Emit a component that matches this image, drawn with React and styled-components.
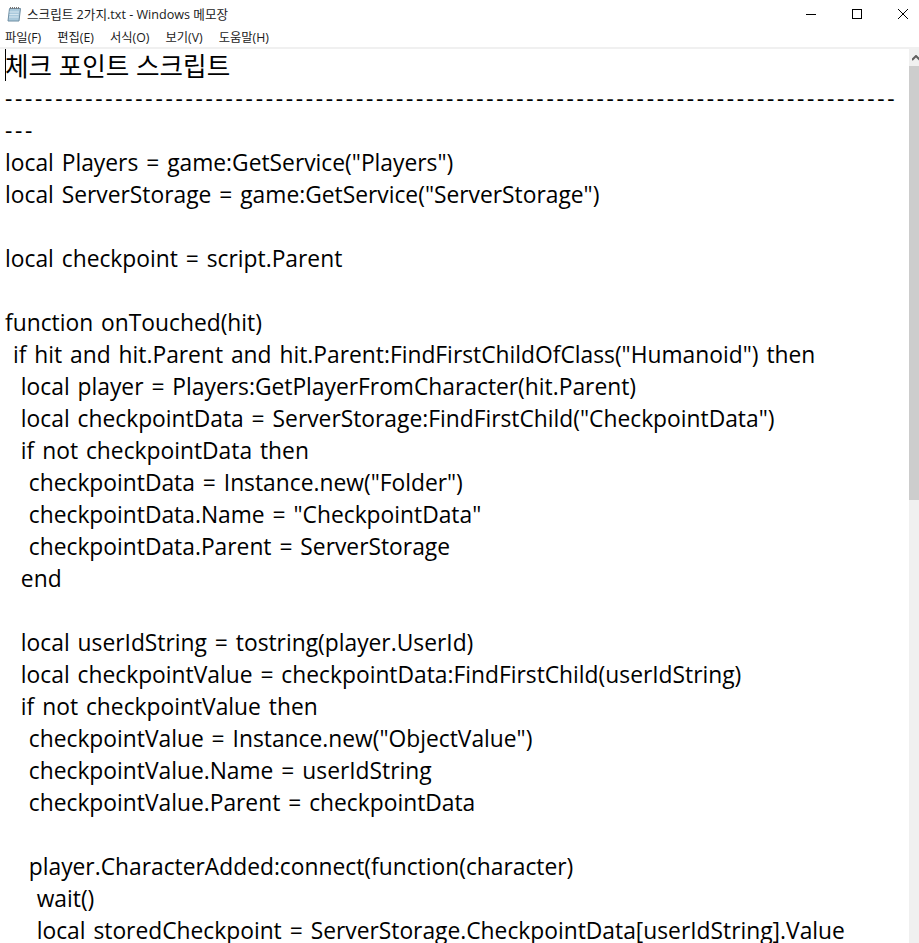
import React from "react";
import styled, { createGlobalStyle } from "styled-components";

const GlobalStyle = createGlobalStyle`
  html, body {
    margin: 0;
    padding: 0;
    background: #fff;
    overflow: hidden;
  }
`;

const Window = styled.div`
  width: 919px;
  height: 943px;
  display: flex;
  flex-direction: column;
  overflow: hidden;
  background: #fff;
  font-family: "Open Sans", "Noto Sans CJK KR", sans-serif;
`;

const TitleBar = styled.div`
  height: 27px;
  flex: none;
  display: flex;
  align-items: center;
  padding-left: 6px;
`;

const Title = styled.div`
  margin-left: 5px;
  font-size: 12.6px;
  color: #1a1a1a;
  white-space: nowrap;
`;

const Controls = styled.div`
  margin-left: auto;
  margin-right: -7px;
  display: flex;
  height: 100%;
`;

const ControlButton = styled.div`
  width: 46px;
  display: flex;
  align-items: center;
  justify-content: center;
`;

const MenuBar = styled.div`
  height: 20px;
  flex: none;
  display: flex;
  align-items: center;
  gap: 16px;
  padding-left: 5px;
  font-size: 12.3px;
  color: #1a1a1a;
`;

const Divider = styled.div`
  height: 2px;
  flex: none;
  background: #f0f0f0;
`;

const Body = styled.div`
  flex: 1;
  min-height: 0;
  display: flex;
`;

const TextArea = styled.div`
  flex: 1;
  min-width: 0;
  overflow: hidden;
  position: relative;
  padding: 3px 0 0 5px;
  color: #000;
  font-size: 22.8px;
  line-height: 32px;
  word-spacing: 2px;
  white-space: pre;
`;

const Line = styled.div`
  height: 32px;
`;

const Heading = styled(Line)`
  font-size: 25.6px;
  word-spacing: 0;
  margin-top: -1px;
`;

const DashLine = styled(Line)`
  letter-spacing: ${(p) => p.$spacing}px;
`;

const Caret = styled.div`
  position: absolute;
  left: 5px;
  top: 0;
  width: 1px;
  height: 32px;
  background: #000;
`;

const ScrollBar = styled.div`
  width: 10px;
  flex: none;
  display: flex;
  flex-direction: column;
  background: #f0f0f0;
`;

const ScrollArrow = styled.div`
  height: 17px;
  flex: none;
  display: flex;
  align-items: center;
  padding-left: 3px;
  overflow: hidden;
`;

const ScrollThumb = styled.div`
  height: 434px;
  flex: none;
  background: #cdcdcd;
`;

const lines = [
  'local Players = game:GetService("Players")',
  'local ServerStorage = game:GetService("ServerStorage")',
  "",
  "local checkpoint = script.Parent",
  "",
  "function onTouched(hit)",
  ' if hit and hit.Parent and hit.Parent:FindFirstChildOfClass("Humanoid") then',
  "  local player = Players:GetPlayerFromCharacter(hit.Parent)",
  '  local checkpointData = ServerStorage:FindFirstChild("CheckpointData")',
  "  if not checkpointData then",
  '   checkpointData = Instance.new("Folder")',
  '   checkpointData.Name = "CheckpointData"',
  "   checkpointData.Parent = ServerStorage",
  "  end",
  "",
  "  local userIdString = tostring(player.UserId)",
  "  local checkpointValue = checkpointData:FindFirstChild(userIdString)",
  "  if not checkpointValue then",
  '   checkpointValue = Instance.new("ObjectValue")',
  "   checkpointValue.Name = userIdString",
  "   checkpointValue.Parent = checkpointData",
  "",
  "   player.CharacterAdded:connect(function(character)",
  "    wait()",
  "    local storedCheckpoint = ServerStorage.CheckpointData[userIdString].Value",
];

const menus = ["파일(F)", "편집(E)", "서식(O)", "보기(V)", "도움말(H)"];

function NotepadIcon() {
  return (
    <svg width="16" height="16" viewBox="0 0 16 16" style={{ flex: "none" }}>
      <path d="M3.5 2.5h11l-1.500 12.500h-11z" fill="#a9c9dc" stroke="#6f8ea3" />
      <path d="M3.500 6h9.500M3.500 8.500h9M3 11h9.500" stroke="#d5e6f0" />
      <path d="M4.500 1v2M6.500 1v2M8.500 1v2M10.500 1v2M12.500 1v2" stroke="#777" />
    </svg>
  );
}

export default function App() {
  return (
    <Window>
      <GlobalStyle />
      <TitleBar>
        <NotepadIcon />
        <Title>스크립트 2가지.txt - Windows 메모장</Title>
        <Controls>
          <ControlButton>
            <svg width="10" height="10" viewBox="0 0 10 10">
              <path d="M0 5.5h10" stroke="#000" />
            </svg>
          </ControlButton>
          <ControlButton>
            <svg width="10" height="10" viewBox="0 0 10 10">
              <rect x="0.5" y="0.5" width="9" height="9" fill="none" stroke="#000" />
            </svg>
          </ControlButton>
          <ControlButton>
            <svg width="10" height="10" viewBox="0 0 10 10">
              <path d="M0 0l10 10M10 0L0 10" stroke="#000" />
            </svg>
          </ControlButton>
        </Controls>
      </TitleBar>
      <MenuBar>
        {menus.map((m) => (
          <span key={m}>{m}</span>
        ))}
      </MenuBar>
      <Divider />
      <Body>
        <TextArea>
          <Caret />
          <Heading>체크 포인트 스크립트</Heading>
          <DashLine $spacing={2.69}>{"-".repeat(89)}</DashLine>
          <DashLine $spacing={2.69}>---</DashLine>
          {lines.map((l, i) => (
            <Line key={i}>{l}</Line>
          ))}
        </TextArea>
        <ScrollBar>
          <ScrollArrow>
            <svg width="8" height="6" viewBox="0 0 8 6" style={{ flex: "none" }}>
              <path d="M0 5l4-4 4 4" fill="none" stroke="#606060" strokeWidth="2" />
            </svg>
          </ScrollArrow>
          <ScrollThumb />
        </ScrollBar>
      </Body>
    </Window>
  );
}
